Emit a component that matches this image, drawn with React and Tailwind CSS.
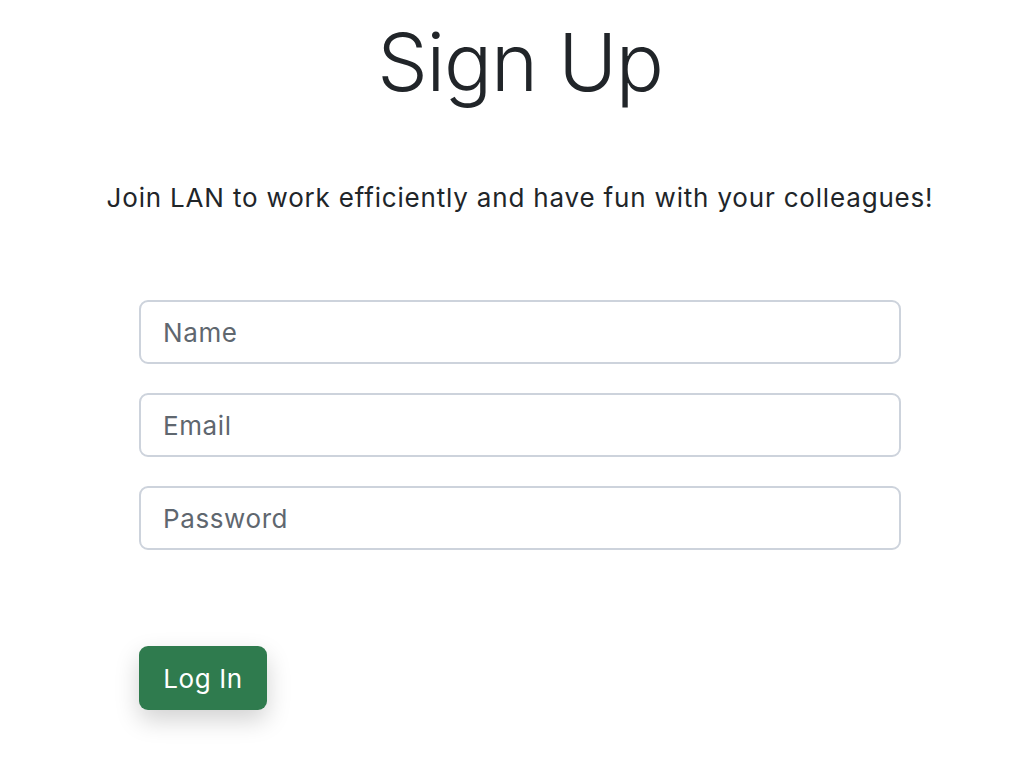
import React from 'react';

const inputClass =
  'h-[64px] w-full rounded-[9px] border-2 border-[#cdd3dc] px-[22px] text-[26px] tracking-[0.6px] text-[#212529] placeholder:text-[#5f676f] outline-none';

const App = () => {
  return (
    <div className="min-h-screen bg-white pl-4 text-[#212529]" style={{ fontFamily: 'Inter, "Noto Sans", sans-serif' }}>
      <div className="flex flex-col items-center">
        <h1 className="mt-[14px] text-[80px] font-light leading-[96px] tracking-[-1.2px]">Sign Up</h1>
        <p className="mt-[70px] text-[26px] leading-[36px] tracking-[0.82px]">
          Join LAN to work efficiently and have fun with your colleagues!
        </p>
        <form className="mt-[84px] flex w-[762px] flex-col gap-[29px]">
          <input type="text" placeholder="Name" className={inputClass} />
          <input type="email" placeholder="Email" className={inputClass} />
          <input type="password" placeholder="Password" className={inputClass} />
          <div className="mt-[67px]">
            <button
              type="button"
              className="h-[64px] w-[128px] rounded-[9px] bg-[#2f7b4e] text-[26px] tracking-[0.6px] text-white shadow-[0_10px_24px_rgba(0,0,0,0.18)]"
            >
              Log In
            </button>
          </div>
        </form>
      </div>
    </div>
  );
};

export default App;
